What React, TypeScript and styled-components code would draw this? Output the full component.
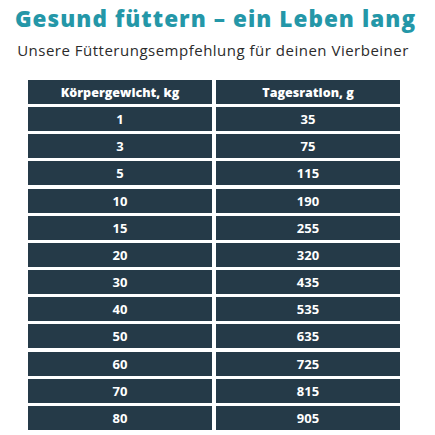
import React from "react";
import styled, { createGlobalStyle } from "styled-components";

const Global = createGlobalStyle`
  html, body { margin: 0; padding: 0; background: #fff; }
  body { font-family: "Open Sans", sans-serif; }
`;

const Page = styled.div`
  width: 435px;
  height: 435px;
  display: flex;
  flex-direction: column;
  box-sizing: border-box;
  padding-top: 4px;
`;

const Title = styled.h1`
  margin: 0 4px 0 0;
  align-self: center;
  font-family: "Open Sans", sans-serif;
  font-weight: 800;
  font-size: 22.5px;
  line-height: 30px;
  color: #2497a8;
  letter-spacing: 1.05px;
  white-space: nowrap;
`;

const Subtitle = styled.p`
  margin: 6px 9px 0 0;
  align-self: center;
  font-family: "Open Sans", sans-serif;
  font-weight: 400;
  font-size: 15px;
  line-height: 20px;
  color: #2b2b2b;
  letter-spacing: 0.5px;
  white-space: nowrap;
`;

const Table = styled.div`
  margin: 20px 0 0 28px;
  display: grid;
  grid-template-columns: 184px 184px;
  column-gap: 4px;
  row-gap: 3.17px;
`;

const Cell = styled.div<{ $head?: boolean }>`
  height: 24px;
  background: #253a48;
  color: #fff;
  display: flex;
  align-items: center;
  justify-content: center;
  font-family: "Open Sans", sans-serif;
  font-weight: ${(p) => (p.$head ? 800 : 700)};
  font-size: ${(p) => (p.$head ? "12.5px" : "13px")};
  letter-spacing: 0;
`;

const rows: [string, string][] = [
  ["1", "35"],
  ["3", "75"],
  ["5", "115"],
  ["10", "190"],
  ["15", "255"],
  ["20", "320"],
  ["30", "435"],
  ["40", "535"],
  ["50", "635"],
  ["60", "725"],
  ["70", "815"],
  ["80", "905"],
];

export default function App() {
  return (
    <Page>
      <Global />
      <Title>Gesund füttern – ein Leben lang</Title>
      <Subtitle>Unsere Fütterungsempfehlung für deinen Vierbeiner</Subtitle>
      <Table>
        <Cell $head>Körpergewicht, kg</Cell>
        <Cell $head>Tagesration, g</Cell>
        {rows.map(([a, b]) => (
          <React.Fragment key={a}>
            <Cell>{a}</Cell>
            <Cell>{b}</Cell>
          </React.Fragment>
        ))}
      </Table>
    </Page>
  );
}
